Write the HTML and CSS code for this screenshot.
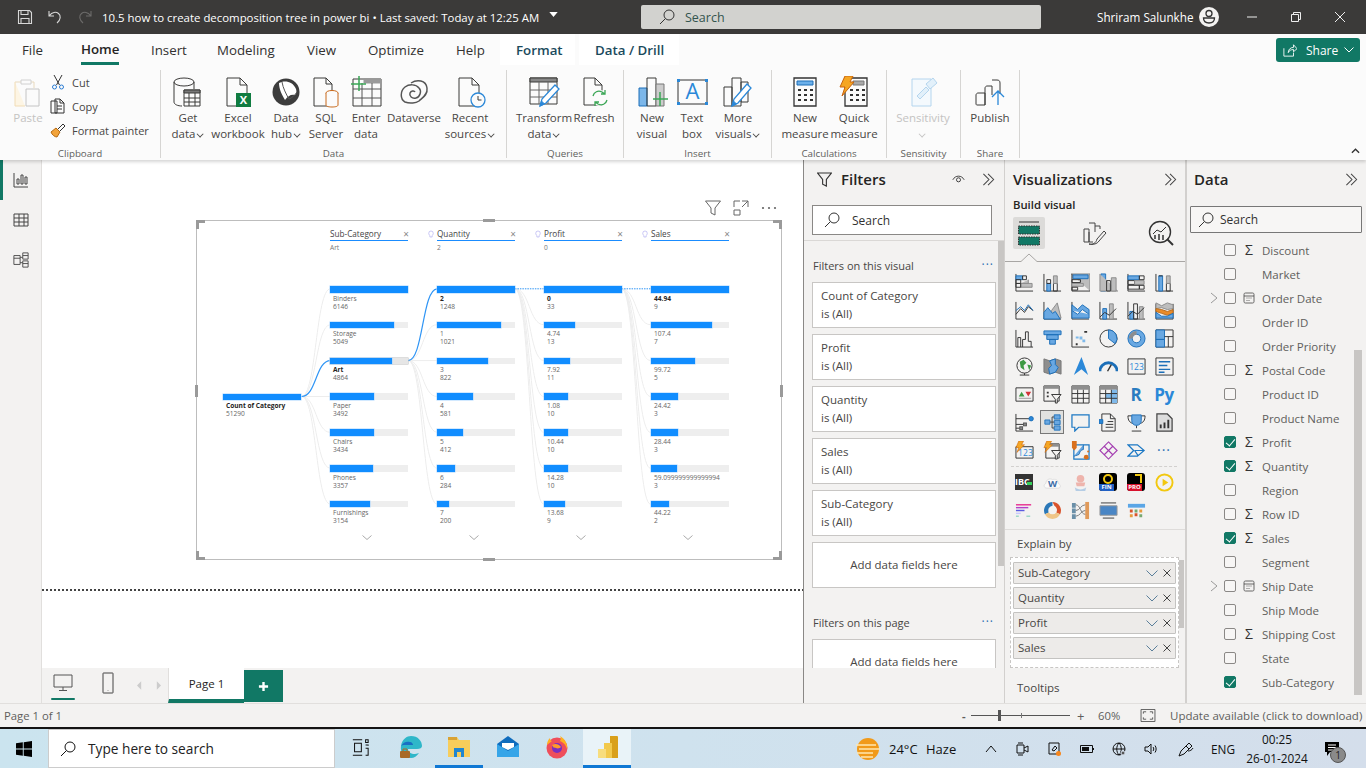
FILE: index.html
```html
<!DOCTYPE html>
<html lang="en">
<head>
<meta charset="utf-8">
<title>Power BI Desktop</title>
<link rel="stylesheet" href="styles.css">
</head>
<body>
<div class="app">

<header class="titlebar">
  <svg class="tb-ic first" viewBox="0 0 16 16"><path d="M1.500 1.500h11l2 2v11h-13z"/><path d="M4 1.500v4h7v-4M4 14.500v-5h8v5"/></svg>
  <svg class="tb-ic" viewBox="0 0 16 16"><path d="M2 2v5h5M2.500 6.500C5 3 9 2.500 11.500 4.500S14 10.500 10 14"/></svg>
  <svg class="tb-ic dim" viewBox="0 0 16 16"><path d="M14 2v5H9M13.500 6.500C11 3 7 2.500 4.500 4.500S2 10.500 6 14"/></svg>
  <span class="doc-title">10.5 how to create decomposition tree in power bi &bull; Last saved: Today at 12:25 AM</span>
  <svg class="caret" viewBox="0 0 10 6"><path d="M0 0h10L5 6z"/></svg>
  <div class="top-search">
    <svg viewBox="0 0 16 16"><circle cx="10" cy="6" r="5"/><path d="M6.500 9.500L1 15"/></svg>
    <span>Search</span>
  </div>
  <span class="user">Shriram Salunkhe</span>
  <svg class="avatar" viewBox="0 0 20 20"><circle cx="10" cy="10" r="10" fill="#f3f2f1"/><circle cx="10" cy="6.500" r="3" fill="none" stroke="#333" stroke-width="1.300"/><path d="M4.500 11h11c0 3.500-2.500 5-5.500 5s-5.500-1.500-5.500-5z" fill="none" stroke="#333" stroke-width="1.300"/></svg>
  <div class="win-btns">
    <svg viewBox="0 0 12 12"><path d="M1 6h10"/></svg>
    <svg viewBox="0 0 12 12"><path d="M1.500 3.500h7v7h-7zM3.500 3.500v-2h7v7h-2"/></svg>
    <svg viewBox="0 0 12 12"><path d="M1 1l10 10M11 1L1 11"/></svg>
  </div>
</header>

<section class="ribbon">
  <nav class="tabs">
    <span class="tab w59 first-tab">File</span>
    <span class="tab w70 current"><span class="tab-label">Home</span></span>
    <span class="tab w66">Insert</span>
    <span class="tab w90">Modeling</span>
    <span class="tab w61">View</span>
    <span class="tab w88">Optimize</span>
    <span class="tab w44">Help</span>
    <span class="tab ctx w75">Format</span>
    <span class="tab ctx w100">Data / Drill</span>
    <span class="share">
      <svg viewBox="0 0 16 16"><path d="M1 6v9h11v-4M6 11c0-4 3-6 6-6V2l4 4.500L12 10V7.500c-3 0-5 1-6 3.500z"/></svg>
      Share
      <svg class="share-chev" viewBox="0 0 10 6"><path d="M.5.500L5 5 9.500.500"/></svg>
    </span>
  </nav>
  <div class="commands">
    <div class="group w161">
      <div class="items pl6">
        <div class="item w44 off">
          <svg viewBox="0 0 32 32"><path d="M3 6h6M19 6h3v6" stroke="#e8d9bd"/><path d="M3 6v24h10" stroke="#f1dcb5" fill="#fdf5e4"/><path d="M9 4h10v4H9z" stroke="#d0d0d0"/><path d="M14 13h13v17H14z" stroke="#c4c4c4" fill="#fbfbfb"/></svg>
          <span>Paste</span>
        </div>
        <div class="small-col">
          <div class="small"><svg viewBox="0 0 16 16"><path d="M4 1l5.500 10M12 1L6.500 11" stroke="#333"/><circle cx="4.500" cy="13" r="2" stroke="#2b7cd3"/><circle cx="11.500" cy="13" r="2" stroke="#2b7cd3"/></svg><span>Cut</span></div>
          <div class="small"><svg viewBox="0 0 16 16"><path d="M5 3V1h5l4 4v10H5zM1 3h6v12H1z" stroke="#333"/><path d="M10 1v4h4M7 8h5M7 11h5" stroke="#333"/></svg><span>Copy</span></div>
          <div class="small"><svg viewBox="0 0 16 16"><path d="M1 10l5-4 4 4-3 5c-2 0-5-2-6-5z" fill="#f2a33a" stroke="#b56a12"/><path d="M8 7l5-5 2 2-5 5" fill="#fff" stroke="#333"/></svg><span>Format painter</span></div>
        </div>
      </div>
      <div class="group-name">Clipboard</div>
    </div>
    <div class="group w346">
      <div class="items pl5">
        <div class="item w44">
          <svg viewBox="0 0 32 32"><ellipse cx="12" cy="6" rx="10" ry="4"/><path d="M2 6v20c0 2.500 4 4 8 4M22 6v7"/><path d="M12 14h16v16H12z" fill="#fbfbfb"/><path d="M12 14h16v3H12z" fill="#777"/><path d="M17 17v13M23 17v13M12 22h16M12 26h16"/></svg>
          <span>Get<br>data<i class="chev"></i></span>
        </div>
        <div class="item w56">
          <svg viewBox="0 0 32 32"><path d="M5 2h13l7 7v21H5z"/><path d="M18 2v7h7"/><rect x="14" y="17" width="15" height="14" fill="#107c41" stroke="none"/><text x="21.500" y="28" class="svg-x">X</text></svg>
          <span>Excel<br>workbook</span>
        </div>
        <div class="item w40">
          <svg viewBox="0 0 32 32"><circle cx="16" cy="16" r="13.500" fill="#3c3c3c" stroke="none"/><path d="M9 7c5-3 14-2 17 6 1 3 0 5-1 6-4-1-7 1-10 5-3-5-6-11-6-17z" fill="#fff" stroke="none"/><path d="M12 6c1 6 4 12 7 17 3-1 6-4 8-7" stroke="#555"/></svg>
          <span>Data<br>hub<i class="chev"></i></span>
        </div>
        <div class="item w40">
          <svg viewBox="0 0 32 32"><path d="M4 2h12l6 6v22H4z" /><path d="M16 2v6h6"/><ellipse cx="22" cy="17" rx="6" ry="2.500" fill="#fbfbfb" stroke="#c8691b"/><path d="M16 17v12c0 1.500 3 2 6 2s6-.500 6-2V17" fill="#fbfbfb" stroke="#c8691b"/></svg>
          <span>SQL<br>Server</span>
        </div>
        <div class="item w40">
          <svg viewBox="0 0 32 32"><path d="M3 3h28v27H3z"/><path d="M14 3h17v4H14z" fill="#999" stroke="#999"/><path d="M3 13h28M3 22h28M12 7v23M22 7v23" stroke="#555"/><path d="M9 0v15M1 8h15" stroke="#3aa655" stroke-width="1.500"/></svg>
          <span>Enter<br>data</span>
        </div>
        <div class="item w56">
          <svg viewBox="0 0 32 32"><path d="M13 7c6-4 15-3 16 5 1 7-5 10-8 13-3 2-9 3-14 1-5-3-5-11 0-15 4-3 11-3 14 1 3 3 1 9-3 10-4 1-7-2-6-5 1-2 4-3 5-1" stroke="#555" stroke-width="1.500"/></svg>
          <span>Dataverse</span>
        </div>
        <div class="item w56">
          <svg viewBox="0 0 32 32"><path d="M5 2h13l7 7v21H5z"/><path d="M18 2v7h7"/><circle cx="24" cy="24" r="7" fill="#fbfbfb" stroke="#2b88d8" stroke-width="1.300"/><path d="M24 20v4h3.500"/></svg>
          <span>Recent<br>sources<i class="chev"></i></span>
        </div>
      </div>
      <div class="group-name">Data</div>
    </div>
    <div class="group w117">
      <div class="items pl9">
        <div class="item w56">
          <svg viewBox="0 0 32 32"><path d="M2 2h27v26H2z"/><path d="M2 2h27v4H2z" fill="#888"/><path d="M2 14h27M2 21h27M11 6v22M20 6v22" stroke="#666"/><path d="M12 30l2-7 13-14 4 4-13 14z" fill="#fff" stroke="#2b88d8" stroke-width="1.300"/><path d="M12 30l1.500-5 3 3z" fill="#2b88d8" stroke="#2b88d8"/></svg>
          <span>Transform<br>data<i class="chev"></i></span>
        </div>
        <div class="item w44">
          <svg viewBox="0 0 32 32"><path d="M6 2h11l7 7v20H6z"/><path d="M17 2v7h7"/><circle cx="22" cy="22" r="8" fill="#fbfbfb" stroke="none"/><path d="M15 20c1-4 5-6 9-4l3 2M29 24c-1 4-5 6-9 4l-3-2M27 14v4h-4M17 30v-4h4" stroke="#3aa655" stroke-width="1.300"/></svg>
          <span>Refresh</span>
        </div>
      </div>
      <div class="group-name">Queries</div>
    </div>
    <div class="group w148">
      <div class="items pl8">
        <div class="item w40">
          <svg viewBox="0 0 32 32"><path d="M3 12h8v18H3z" fill="#7cb7ea" stroke="#1c6fb8"/><path d="M11 2h9v28h-9z"/><path d="M20 8h8v22h-8z" fill="#ccc" stroke="#777"/><path d="M24 16v14M17 23h15" stroke="#3aa655" stroke-width="1.500"/></svg>
          <span>New<br>visual</span>
        </div>
        <div class="item w40">
          <svg viewBox="0 0 32 32"><path d="M2 4h29v24H2z" stroke="#333"/><path d="M1 3h3v3H1zM29 3h3v3h-3zM1 26h3v3H1zM29 26h3v3h-3z" fill="#2b88d8" stroke="none"/><text x="16.500" y="23" class="svg-a">A</text></svg>
          <span>Text<br>box</span>
        </div>
        <div class="item w52">
          <svg viewBox="0 0 32 32"><path d="M2 11h8v19H2zM10 2h9v28h-9zM19 6h7v20h-7z"/><path d="M10 30l2-7 13-15 4 4-13 15z" fill="#fff" stroke="#2b88d8" stroke-width="1.300"/><path d="M10 30l1.500-5 3 3z" fill="#2b88d8" stroke="#2b88d8"/></svg>
          <span>More<br>visuals<i class="chev"></i></span>
        </div>
      </div>
      <div class="group-name">Insert</div>
    </div>
    <div class="group w115">
      <div class="items pl8">
        <div class="item w50">
          <svg viewBox="0 0 32 32"><path d="M5 2h22v28H5z" stroke="#333" stroke-width="1.300"/><path d="M8 5h16v4H8z" fill="#6cb0ea" stroke="#1c6fb8"/><path class="dots" d="M9 13h3v2H9zM15 13h3v2h-3zM21 13h3v2h-3zM9 18h3v2H9zM15 18h3v2h-3zM21 18h3v2h-3zM9 23h3v2H9zM15 23h3v2h-3zM21 23h3v2h-3z"/></svg>
          <span>New<br>measure</span>
        </div>
        <div class="item w48">
          <svg viewBox="0 0 32 32"><path d="M7 2h22v28H7z" stroke="#333" stroke-width="1.300"/><path d="M15 5h11v4H15z" fill="#aaa" stroke="#777"/><path class="dots" d="M12 13h3v2h-3zM18 13h3v2h-3zM24 13h3v2h-3zM12 18h3v2h-3zM18 18h3v2h-3zM24 18h3v2h-3zM12 23h3v2h-3zM18 23h3v2h-3zM24 23h3v2h-3z"/><path d="M7 0h8l-3 6h4L4 20l3-9H2z" fill="#f5a623" stroke="#c9640e"/></svg>
          <span>Quick<br>measure</span>
        </div>
      </div>
      <div class="group-name">Calculations</div>
    </div>
    <div class="group w74">
      <div class="items pl8">
        <div class="item w56 off">
          <svg viewBox="0 0 32 32"><path d="M5 3h19v27H5z" stroke="#b4d5ee" fill="#f4f9fd"/><path d="M10 20l9-9 3 3-9 9z" stroke="#b4d5ee" fill="#e2f0fa"/><path d="M19 8l7-6 4 5-7 6z" stroke="#b4d5ee" fill="#e2f0fa"/></svg>
          <span>Sensitivity<br><i class="chev"></i></span>
        </div>
      </div>
      <div class="group-name">Sensitivity</div>
    </div>
    <div class="group w59">
      <div class="items pl9">
        <div class="item w40">
          <svg viewBox="0 0 32 32"><path d="M2 19c0-1 1-2 2-2h7v12H3c-1 0-1-1-1-1zM11 12c0-1 1-2 2-2h5v9M11 12v17M18 4h5c2 0 3 1 3 3v11"/><path d="M24 29V15M18 21l6-6 6 6" stroke="#2b88d8" stroke-width="1.300"/></svg>
          <span>Publish</span>
        </div>
      </div>
      <div class="group-name">Share</div>
    </div>
    <svg class="collapse" viewBox="0 0 10 6"><path d="M1 5l4-4 4 4"/></svg>
  </div>
</section>

<main class="workspace">
  <aside class="rail">
    <div class="rail-btn active"><svg viewBox="0 0 16 16"><path d="M1 1v14h14"/><path d="M4 12V7h2v5zM8 12V3h2v9zM12 12V5h2v7z"/></svg></div>
    <div class="rail-btn"><svg viewBox="0 0 16 16"><path d="M1 2h14v12H1zM1 6h14M1 10h14M6 2v12M11 2v12"/></svg></div>
    <div class="rail-btn"><svg viewBox="0 0 18 18"><path d="M1 4h7v10H1zM1 7h7M8 6h3M11 1h6v7h-6zM11 10h6v7h-6zM11 4h6M11 13h6M8 12h3"/></svg></div>
  </aside>

  <div class="report">
    <div class="canvas">
      <div class="visual-tools">
        <svg viewBox="0 0 16 16"><path d="M.5 1h15L10 8v7l-4-2V8z"/></svg>
        <svg viewBox="0 0 16 16"><path d="M1 7V1h6M1 10v5h6v-5H1M9 1h6v6M9 7l6-6"/></svg>
        <svg viewBox="0 0 16 16" class="fill"><circle cx="2" cy="8" r="1.100"/><circle cx="8" cy="8" r="1.100"/><circle cx="14" cy="8" r="1.100"/></svg>
      </div>
      <div class="visual">
        <svg class="links" viewBox="197 221 584 339">
          <g class="faint">
            <path d="M301 397C316 397 315 289 330 289M301 397C316 397 315 325 330 325M301 397H330M301 397C316 397 315 433 330 433M301 397C316 397 315 469 330 469M301 397C316 397 315 505 330 505"/>
            <path d="M408 361C423 361 422 325 437 325M408 361H437M408 361C423 361 422 397 437 397M408 361C423 361 422 433 437 433M408 361C423 361 422 469 437 469M408 361C423 361 422 505 437 505"/>
            <path d="M515 289C530 289 529 325 544 325M515 289C530 289 529 361 544 361M515 289C530 289 529 397 544 397M515 289C530 289 529 433 544 433M515 289C530 289 529 469 544 469M515 289C530 289 529 505 544 505"/>
            <path d="M622 289C637 289 636 325 651 325M622 289C637 289 636 361 651 361M622 289C637 289 636 397 651 397M622 289C637 289 636 433 651 433M622 289C637 289 636 469 651 469M622 289C637 289 636 505 651 505"/>
          </g>
          <g class="blue">
            <path d="M301 397C316 397 315 361 330 361M408 361C423 361 422 289 437 289"/>
            <path class="dotted" d="M515 289H544M622 289H651"/>
          </g>
        </svg>
        <i class="corner tl"></i><i class="corner tr"></i><i class="corner bl"></i><i class="corner br"></i>
        <i class="edge top"></i><i class="edge bottom"></i><i class="edge left"></i><i class="edge right"></i>

        <div class="tree">
          <div class="col root">
            <div class="row">
              <div class="track"><div class="fill-bar full"></div></div>
              <div class="t-label sel">Count of Category</div>
              <div class="t-val">51290</div>
            </div>
          </div>

          <div class="col">
            <div class="col-head"><span>Sub-Category</span><b>&times;</b></div>
            <div class="col-sub">Art</div>
            <div class="rows">
              <div class="row"><div class="track"><div class="fill-bar" style="width:100%"></div></div><div class="t-label">Binders</div><div class="t-val">6146</div></div>
              <div class="row"><div class="track"><div class="fill-bar" style="width:82%"></div></div><div class="t-label">Storage</div><div class="t-val">5049</div></div>
              <div class="row"><div class="track chosen"><div class="fill-bar" style="width:79%"></div></div><div class="t-label sel">Art</div><div class="t-val">4864</div></div>
              <div class="row"><div class="track"><div class="fill-bar" style="width:57%"></div></div><div class="t-label">Paper</div><div class="t-val">3492</div></div>
              <div class="row"><div class="track"><div class="fill-bar" style="width:56%"></div></div><div class="t-label">Chairs</div><div class="t-val">3434</div></div>
              <div class="row"><div class="track"><div class="fill-bar" style="width:54.500%"></div></div><div class="t-label">Phones</div><div class="t-val">3357</div></div>
              <div class="row"><div class="track"><div class="fill-bar" style="width:51%"></div></div><div class="t-label">Furnishings</div><div class="t-val">3154</div></div>
            </div>
            <svg class="more" viewBox="0 0 10 5"><path d="M.5.500L5 4.500 9.500.500"/></svg>
          </div>

          <div class="col">
            <div class="col-head"><svg class="bulb" viewBox="0 0 8 10"><path d="M2.500 7C1 6 1 4.500 1 4a3 3 0 0 1 6 0c0 .500 0 2-1.500 3v2h-3z"/></svg><span>Quantity</span><b>&times;</b></div>
            <div class="col-sub">2</div>
            <div class="rows">
              <div class="row"><div class="track"><div class="fill-bar" style="width:100%"></div></div><div class="t-label sel">2</div><div class="t-val">1248</div></div>
              <div class="row"><div class="track"><div class="fill-bar" style="width:82%"></div></div><div class="t-label">1</div><div class="t-val">1021</div></div>
              <div class="row"><div class="track"><div class="fill-bar" style="width:66%"></div></div><div class="t-label">3</div><div class="t-val">822</div></div>
              <div class="row"><div class="track"><div class="fill-bar" style="width:46.500%"></div></div><div class="t-label">4</div><div class="t-val">581</div></div>
              <div class="row"><div class="track"><div class="fill-bar" style="width:33%"></div></div><div class="t-label">5</div><div class="t-val">412</div></div>
              <div class="row"><div class="track"><div class="fill-bar" style="width:23%"></div></div><div class="t-label">6</div><div class="t-val">284</div></div>
              <div class="row"><div class="track"><div class="fill-bar" style="width:16%"></div></div><div class="t-label">7</div><div class="t-val">200</div></div>
            </div>
            <svg class="more" viewBox="0 0 10 5"><path d="M.5.500L5 4.500 9.500.500"/></svg>
          </div>

          <div class="col">
            <div class="col-head"><svg class="bulb" viewBox="0 0 8 10"><path d="M2.500 7C1 6 1 4.500 1 4a3 3 0 0 1 6 0c0 .500 0 2-1.500 3v2h-3z"/></svg><span>Profit</span><b>&times;</b></div>
            <div class="col-sub">0</div>
            <div class="rows">
              <div class="row"><div class="track"><div class="fill-bar" style="width:100%"></div></div><div class="t-label sel">0</div><div class="t-val">33</div></div>
              <div class="row"><div class="track"><div class="fill-bar" style="width:39.500%"></div></div><div class="t-label">4.74</div><div class="t-val">13</div></div>
              <div class="row"><div class="track"><div class="fill-bar" style="width:33.500%"></div></div><div class="t-label">7.92</div><div class="t-val">11</div></div>
              <div class="row"><div class="track"><div class="fill-bar" style="width:30.500%"></div></div><div class="t-label">1.08</div><div class="t-val">10</div></div>
              <div class="row"><div class="track"><div class="fill-bar" style="width:30.500%"></div></div><div class="t-label">10.44</div><div class="t-val">10</div></div>
              <div class="row"><div class="track"><div class="fill-bar" style="width:30.500%"></div></div><div class="t-label">14.28</div><div class="t-val">10</div></div>
              <div class="row"><div class="track"><div class="fill-bar" style="width:27.500%"></div></div><div class="t-label">13.68</div><div class="t-val">9</div></div>
            </div>
            <svg class="more" viewBox="0 0 10 5"><path d="M.5.500L5 4.500 9.500.500"/></svg>
          </div>

          <div class="col">
            <div class="col-head"><svg class="bulb" viewBox="0 0 8 10"><path d="M2.500 7C1 6 1 4.500 1 4a3 3 0 0 1 6 0c0 .500 0 2-1.500 3v2h-3z"/></svg><span>Sales</span><b>&times;</b></div>
            <div class="col-sub">&nbsp;</div>
            <div class="rows">
              <div class="row"><div class="track"><div class="fill-bar" style="width:100%"></div></div><div class="t-label sel">44.94</div><div class="t-val">9</div></div>
              <div class="row"><div class="track"><div class="fill-bar" style="width:78%"></div></div><div class="t-label">107.4</div><div class="t-val">7</div></div>
              <div class="row"><div class="track"><div class="fill-bar" style="width:56%"></div></div><div class="t-label">99.72</div><div class="t-val">5</div></div>
              <div class="row"><div class="track"><div class="fill-bar" style="width:34%"></div></div><div class="t-label">24.42</div><div class="t-val">3</div></div>
              <div class="row"><div class="track"><div class="fill-bar" style="width:34%"></div></div><div class="t-label">28.44</div><div class="t-val">3</div></div>
              <div class="row"><div class="track"><div class="fill-bar" style="width:33.500%"></div></div><div class="t-label">59.099999999999994</div><div class="t-val">3</div></div>
              <div class="row"><div class="track"><div class="fill-bar" style="width:22.500%"></div></div><div class="t-label">44.22</div><div class="t-val">2</div></div>
            </div>
            <svg class="more" viewBox="0 0 10 5"><path d="M.5.500L5 4.500 9.500.500"/></svg>
          </div>
        </div>
      </div>
      <div class="page-end"></div>
    </div>

    <div class="pagebar">
      <div class="view-btn on"><svg viewBox="0 0 20 18"><path d="M1 1h18v12H1zM10 13v3M6 16.500h8"/></svg></div>
      <div class="view-btn"><svg viewBox="0 0 12 22"><path d="M1.500 1h9c.500 0 .500 0 .500 .500v19c0 .500 0 .500-.500 .500h-9c-.500 0-.500 0-.500-.500v-19c0-.500 0-.500 .500-.500zM6 18.500v.500"/></svg></div>
      <svg class="pg-arrow" viewBox="0 0 6 10"><path d="M5 0v10L0 5z"/></svg>
      <svg class="pg-arrow" viewBox="0 0 6 10"><path d="M1 0v10l5-5z"/></svg>
      <div class="page-tab">Page 1</div>
      <div class="page-add"><svg viewBox="0 0 12 12"><path d="M6 1v10M1 6h10"/></svg></div>
    </div>
  </div>

  <aside class="pane filters">
    <div class="filters-head">
      <svg class="f-ic" viewBox="0 0 16 16"><path d="M.5 1h15L10 8v7l-4-2V8z"/></svg>
      <span class="pane-title">Filters</span>
      <svg class="eye" viewBox="0 0 16 12"><path d="M1 7c3-6 11-6 14 0"/><circle cx="8" cy="7" r="2.500"/></svg>
      <svg class="dbl" viewBox="0 0 14 14"><path d="M1.500 1l6 6-6 6M6.500 1l6 6-6 6"/></svg>
    </div>
    <div class="f-search"><svg viewBox="0 0 16 16"><circle cx="10" cy="6" r="5"/><path d="M6.500 9.500L1 15"/></svg><span>Search</span></div>
    <div class="f-scroll">
      <i class="f-thumb"></i>
      <div class="f-section"><span>Filters on this visual</span><em>&middot;&middot;&middot;</em></div>
      <div class="f-card">Count of Category<br>is (All)</div>
      <div class="f-card">Profit<br>is (All)</div>
      <div class="f-card">Quantity<br>is (All)</div>
      <div class="f-card">Sales<br>is (All)</div>
      <div class="f-card">Sub-Category<br>is (All)</div>
      <div class="f-card add">Add data fields here</div>
      <div class="f-section page"><span>Filters on this page</span><em>&middot;&middot;&middot;</em></div>
      <div class="f-card add">Add data fields here</div>
    </div>
  </aside>

  <aside class="pane viz">
    <div class="pane-head"><span class="pane-title">Visualizations</span><svg class="dbl" viewBox="0 0 14 14"><path d="M1.500 1l6 6-6 6M6.500 1l6 6-6 6"/></svg></div>
    <div class="build">Build visual</div>
    <div class="viz-tabs">
      <div class="viz-tab on"><svg viewBox="0 0 26 26"><path d="M3 2h20" stroke="#333"/><rect x="2.500" y="6" width="21" height="8" fill="#117865" stroke="#333" stroke-dasharray="1.500 1"/><rect x="2.500" y="17" width="21" height="8" fill="#117865" stroke="#333" stroke-dasharray="1.500 1"/></svg></div>
      <div class="viz-tab"><svg viewBox="0 0 26 26"><path d="M2 9h5v13H2zM7 3h6v9M13 6h5v3M7 12v10h4" stroke="#444"/><path d="M7 24c4 1 7-1 8-5l7-8 2 2-7 8c-2 3-6 4-10 3z" stroke="#444"/></svg></div>
      <div class="viz-tab"><svg viewBox="0 0 26 26"><circle cx="12" cy="12" r="10.500" stroke="#333" stroke-width="1.400"/><path d="M5 14l4-4 4 2 5-5" stroke="#333"/><path d="M7 19v-4M11 20v-6M15 20v-5" stroke="#333" stroke-width="1.500"/><path d="M19 19l6 6" stroke="#333" stroke-width="2"/></svg></div>
    </div>
    <svg class="viz-rule" viewBox="0 0 180 9"><path d="M0 8.500h16L24 1l8 7.500h148"/></svg>
    <div class="viz-grid">
      <svg viewBox="0 0 20 20"><path class="k" d="M1 1v18h18"/><path class="b" d="M1 3h7v4H1z"/><path class="k" d="M8 3h4v4H8z"/><path class="k" d="M1 7h5v4H1z"/><path class="g" d="M6 11h8v-4"/><path class="g" d="M6 11h12v4H6z"/><path class="k" d="M1 11h5v4H1z"/></svg>
      <svg viewBox="0 0 20 20"><path class="k" d="M1 1v18h18"/><path class="b" d="M4 11h4v8H4z"/><path class="k" d="M8 9h0M4 7h4v4H4z"/><path class="k" d="M11 11h4v8h-4z"/><path class="g" d="M11 3h4v8h-4z"/></svg>
      <svg viewBox="0 0 20 20"><path class="g" d="M0 1h20v18"/><path class="b" d="M2 2h16v4H2z"/><path class="k" d="M1 1v18h19"/><path class="k" d="M1 7h9v3H1z"/><path class="g" d="M1 11h12v3H1z"/><path class="k" d="M1 15h6v3H1z"/></svg>
      <svg viewBox="0 0 20 20"><path class="b" d="M2 1h5v18H2z"/><path class="g" d="M1 1v18h19"/><path class="k" d="M8 8h4v11H8z"/><path class="g" d="M13 5h5v14h-5z"/></svg>
      <svg viewBox="0 0 20 20"><path class="k" d="M1 1v18h18"/><path class="b" d="M1 3h12v4H1z"/><path class="k" d="M13 3h5v4h-5z"/><path class="k" d="M1 8h7v4H1z"/><path class="g" d="M8 8h10v4H8z"/><path class="k" d="M1 13h12v4H1zM13 13h5v4h-5z"/></svg>
      <svg viewBox="0 0 20 20"><path class="k" d="M1 1v18h18"/><path class="b" d="M4 3h4v16H4z"/><path class="k" d="M4 3h4M12 11h4v8h-4z"/><path class="g" d="M12 3h4v8h-4z"/></svg>

      <svg viewBox="0 0 20 20"><path class="k" d="M1 1v18h18"/><path class="k" d="M1 14l5-6 4 4 4-6 5 4"/><path class="l" d="M1 10l5-4 4 4 4-6 5 6"/></svg>
      <svg viewBox="0 0 20 20"><path class="k" d="M1 1v18h18"/><path class="g" d="M9 10l6-8 4 16H6z"/><path class="b" d="M1 19V12l4-5 5 6 3-2 5 8z"/></svg>
      <svg viewBox="0 0 20 20"><path class="k" d="M1 1v18h18"/><path class="b" d="M1 4l6 5 5-5 7 5v9H1z"/><path class="w" d="M1 10l6 4 5-5 7 5"/></svg>
      <svg viewBox="0 0 20 20"><path class="k" d="M1 1v18h18"/><path class="b" d="M4 8h4v11H4z"/><path class="g" d="M11 3h4v16h-4z"/><path class="k" d="M1 17l5-5 5 3 7-7"/></svg>
      <svg viewBox="0 0 20 20"><path class="k" d="M1 1v18h18"/><path class="b" d="M3 11h4v8H3z"/><path class="k" d="M7 3h4v16H7z"/><path class="g" d="M13 6h4v13h-4z"/><path class="k" d="M1 16l5-5 5 3 7-7"/></svg>
      <svg viewBox="0 0 20 20"><path class="k" d="M1 3v16h18V3"/><path class="g" d="M1 2l6 3 6-3 6 2v4l-6 1-6-2-6 1z"/><path class="o" d="M1 8l6 1 6 2 6-2v4l-6 2-6-2-6-2z"/><path class="b" d="M1 12l6 4 6 0 6-3v5H1z"/></svg>

      <svg viewBox="0 0 20 20"><path class="k" d="M1 1v18h18"/><path class="k" d="M3 19V9h3v10M8 19V11h3V3h3v10h3v6"/></svg>
      <svg viewBox="0 0 20 20"><path class="b" d="M1 2h18v4H1zM4 6h12v5H4zM7 11h6v5H7z"/></svg>
      <svg viewBox="0 0 20 20"><path class="k" d="M1 1v18h18"/><path class="dk" d="M5 15h2v2H5zM14 2h3v2h-3z"/><path class="lb" d="M9 8h3v3H9zM12 11h3v3h-3zM5 8h3v2H5z"/></svg>
      <svg viewBox="0 0 20 20"><circle class="k" cx="10" cy="10" r="9"/><path class="b" d="M10 1a9 9 0 0 1 7 14.500L10 10z"/></svg>
      <svg viewBox="0 0 20 20"><circle class="b" cx="10" cy="10" r="9"/><circle class="wf" cx="10" cy="10" r="4.500"/><path class="gf" d="M2 10a8 8 0 0 1 8-8v4a4 4 0 0 0-4 4z"/></svg>
      <svg viewBox="0 0 20 20"><path class="k" d="M1 1h18v18H1z"/><path class="b" d="M1 1h9v10H1zM1 11h9v8H1z"/><path class="k" d="M10 8h9M14 8v11"/></svg>

      <svg viewBox="0 0 20 20"><circle class="k" cx="10" cy="9" r="8"/><path class="gr" d="M5 5l4-2 3 3-3 3 1 5-4-3z"/><path class="gr" d="M13 8l4 1-2 5z"/><path class="k" d="M5 19h10M10 17v2"/></svg>
      <svg viewBox="0 0 20 20"><path class="gf2" d="M1 2l6 2 6-2 6 2v14l-6-2-6 2-6-2z"/><path class="b" d="M7 4l6-2v6l3 3-3 5-6 2-1-6 3-3z"/></svg>
      <svg viewBox="0 0 20 20"><path class="arrow" d="M11 0l7 19-7-6-8 6z"/></svg>
      <svg viewBox="0 0 20 20"><path class="arc" d="M1 15A9 9 0 0 1 19 15"/><path class="k2" d="M9 15l4-7"/></svg>
      <svg viewBox="0 0 20 20"><path class="k" d="M1 2h18v16H1z"/><text x="10" y="14" class="svg-123">123</text></svg>
      <svg viewBox="0 0 20 20"><path class="k" d="M1 1h18v18H1z"/><path class="bl2" d="M4 5h12M4 9h9M4 13h12M4 16h6"/></svg>

      <svg viewBox="0 0 20 20"><path class="k" d="M1 3h18v14H1z"/><path class="gg" d="M4 12l3-5 3 5z"/><path class="rr" d="M11 7h6l-3 5z"/><path class="ggl" d="M4 14h13"/></svg>
      <svg viewBox="0 0 20 20"><path class="k" d="M1 1h16v16H1z"/><path class="gf" d="M1 1h16v3H1z"/><path class="dk" d="M4 7h2v2H4zM4 11h2v2H4z"/><path class="wk" d="M9 10h10l-4 5v4h-2v-4z"/></svg>
      <svg viewBox="0 0 20 20"><path class="k" d="M1 1h18v18H1z"/><path class="gf" d="M1 1h18v4H1z"/><path class="k" d="M1 9h18M1 14h18M7 5v14M13 5v14"/></svg>
      <svg viewBox="0 0 20 20"><path class="k" d="M1 1h18v18H1z"/><path class="gf" d="M1 1h18v4H1z"/><path class="lb" d="M13 5h6v14h-6zM7 9h6v5H7z"/><path class="k" d="M1 9h18M1 14h18M7 5v14M13 5v14"/></svg>
      <span class="glyph r">R</span>
      <span class="glyph py">Py</span>

      <svg viewBox="0 0 20 20"><path class="k" d="M1 1v18h18M1 6h15M1 12h8M1 16h4"/><circle class="bd" cx="17" cy="6" r="2.300"/><rect class="gs" x="9" y="10.500" width="3" height="3"/><rect class="gs" x="5" y="14.500" width="3" height="3"/></svg>
      <span class="tree-on"><svg viewBox="0 0 20 20"><path class="b" d="M1 7h6v5H1zM12 1h7v5h-7zM12 7.500h7v5h-7zM12 14h7v5h-7z"/><path class="k" d="M7 9.500h5M9.500 3.500v13M9.500 3.500H12M9.500 16.500H12"/></svg></span>
      <svg viewBox="0 0 20 20"><path class="bs" d="M1 2h18v13H8l-4 4v-4H1z"/></svg>
      <svg viewBox="0 0 20 20"><path class="k" d="M3 1h9l5 5v13H3z"/><path class="k" d="M12 1v5h5M7 12h8M7 15h8M9 9h6"/><path class="bd" d="M0 7h4v4H0z"/></svg>
      <svg viewBox="0 0 20 20"><path class="k" d="M5 3H1c0 5 2 7 5 8M15 3h4c0 5-2 7-5 8M10 13v3M5 19h10"/><path class="b" d="M5 2h10v6c0 3-2 5-5 5s-5-2-5-5z"/></svg>
      <svg viewBox="0 0 20 20"><path class="kg" d="M2 1h11l5 5v13H2z"/><path class="dk" d="M5 12h2v4H5zM9 10h2v6H9zM13 7h2v9h-2z"/></svg>

      <svg viewBox="0 0 20 20"><path class="k" d="M1 6h18v12H1z"/><text x="11" y="16" class="svg-123b">123</text><path class="bolt" d="M4 0h5L7 4h3L2 12l2-5H1z"/></svg>
      <svg viewBox="0 0 20 20"><path class="k" d="M3 3h14v15H3z"/><path class="gf" d="M7 3h10v3H7z"/><path class="wk" d="M9 10h10l-4 5v4h-2v-4z"/><path class="bolt" d="M4 0h5L7 4h3L2 12l2-5H1z"/></svg>
      <svg viewBox="0 0 20 20"><path class="bs" d="M3 4h16v15H3z"/><path class="b" d="M13 4v5c-2 0-4 2-4 4s-4 2-6 3"/><path class="ob" d="M1 0h5v7L3.500 10 1 7z"/><circle class="ob" cx="16" cy="17" r="2.500"/><circle class="ob" cx="18" cy="11" r="1"/></svg>
      <svg viewBox="0 0 20 20"><path class="pa" d="M10 1l9 9-9 9-9-9zM10 1v0M5.500 5.500l9 9M14.500 5.500l-9 9"/></svg>
      <svg viewBox="0 0 20 20"><path class="bs" d="M1 4h10l7 6-7 6H1l6-6zM8 10l4 6M8 10h10"/></svg>
      <span class="glyph more-viz">&middot;&middot;&middot;</span>
    </div>
    <div class="viz-dash"></div>
    <div class="viz-grid custom">
      <span class="ext-bc">IBC<i></i></span>
      <svg viewBox="0 0 20 20"><path class="cloud" d="M4 16c-3 0-4-4-1-5 0-4 4-6 7-4 3-1 6 0 6 4 3 1 3 5 0 5z"/><text x="10" y="15" class="svg-w">W</text></svg>
      <svg viewBox="0 0 20 20"><circle class="pk" cx="10" cy="6" r="4"/><path class="pk" d="M5 10h10l-1 4H6z"/><path class="bl3" d="M4 15c3 3 9 3 12 0l-1 4H5z"/></svg>
      <span class="ext-fin"><i></i><b class="fin">FIN</b></span>
      <span class="ext-fin pro"><i></i><b class="prot">PRO</b></span>
      <svg viewBox="0 0 20 20"><circle class="yc" cx="10" cy="10" r="8.500"/><path class="yf" d="M8 6l6 4-6 4z"/></svg>
      <svg viewBox="0 0 20 20"><path class="c1" d="M1 4h16"/><path class="c2" d="M1 7h13"/><path class="c3" d="M1 10h9"/><path class="c4" d="M1 13h5"/><path class="c5" d="M1 16h3M12 16h4"/></svg>
      <svg viewBox="0 0 20 20"><path class="p1" d="M10 1a9 9 0 0 0-8 13l4-2a5 5 0 0 1 4-7z"/><path class="p2" d="M10 1a9 9 0 0 1 8 13l-4-2a5 5 0 0 0-2-7z"/><path class="p3" d="M18 14a9 9 0 0 1-16 0l4-2a5 5 0 0 0 8 0z"/></svg>
      <svg viewBox="0 0 20 20"><path class="sk1" d="M1 2h4v5H1zM1 8h4v5H1zM1 14h4v5H1z"/><path class="sk2" d="M15 1h4v18h-4z"/><path class="sk3" d="M5 4c5 0 5 10 10 10M5 10c5 0 5-6 10-6M5 16c5 0 5-6 10-6"/></svg>
      <svg viewBox="0 0 20 20"><path class="gf" d="M2 1h16v2H2zM4 17h12v2H4z"/><path class="mon" d="M1 5h18v10H1z"/></svg>
      <svg viewBox="0 0 20 20"><path class="cal1" d="M1 3h18v4H1z"/><path class="cal2" d="M3 9h3v3H3zM8 13h3v3H8z"/><path class="cal3" d="M13 9h3v3h-3zM3 14h3v3H3z"/><path class="cal4" d="M8 9h3v3H8zM13 14h3v3h-3z"/></svg>
    </div>
    <div class="viz-line"></div>
    <div class="well-title">Explain by</div>
    <div class="well">
      <i class="well-thumb"></i>
      <div class="field"><span>Sub-Category</span><svg class="fchev" viewBox="0 0 12 7"><path d="M.5 .5L6 6l5.500-5.500"/></svg><svg class="fx" viewBox="0 0 8 8"><path d="M.5.500l7 7M7.500.500l-7 7"/></svg></div>
      <div class="field"><span>Quantity</span><svg class="fchev" viewBox="0 0 12 7"><path d="M.5 .5L6 6l5.500-5.500"/></svg><svg class="fx" viewBox="0 0 8 8"><path d="M.5.500l7 7M7.500.500l-7 7"/></svg></div>
      <div class="field"><span>Profit</span><svg class="fchev" viewBox="0 0 12 7"><path d="M.5 .5L6 6l5.500-5.500"/></svg><svg class="fx" viewBox="0 0 8 8"><path d="M.5.500l7 7M7.500.500l-7 7"/></svg></div>
      <div class="field"><span>Sales</span><svg class="fchev" viewBox="0 0 12 7"><path d="M.5 .5L6 6l5.500-5.500"/></svg><svg class="fx" viewBox="0 0 8 8"><path d="M.5.500l7 7M7.500.500l-7 7"/></svg></div>
    </div>
    <div class="well-title tips">Tooltips</div>
  </aside>

  <aside class="pane data">
    <div class="pane-head"><span class="pane-title">Data</span><svg class="dbl" viewBox="0 0 14 14"><path d="M1.500 1l6 6-6 6M6.500 1l6 6-6 6"/></svg></div>
    <div class="d-search"><svg viewBox="0 0 16 16"><circle cx="10" cy="6" r="5"/><path d="M6.500 9.500L1 15"/></svg><span>Search</span></div>
    <i class="d-thumb"></i>
    <ul class="fields">
      <li><i class="exp"></i><i class="cb"></i><i class="ty sig">&Sigma;</i>Discount</li>
      <li><i class="exp"></i><i class="cb"></i><i class="ty"></i>Market</li>
      <li><svg class="exp" viewBox="0 0 8 12"><path d="M1 1l6 5-6 5"/></svg><i class="cb"></i><svg class="ty cal" viewBox="0 0 12 12"><path d="M1 2.500C1 1.500 1.500 1 2.500 1h7c1 0 1.500 .500 1.500 1.500v7c0 1-.500 1.500-1.500 1.500h-7C1.500 11 1 10.500 1 9.500zM1 4h10M3.500 6h1M5.500 6h1M7.500 6h1M3.500 8.500h1M5.500 8.500h1"/></svg>Order Date</li>
      <li><i class="exp"></i><i class="cb"></i><i class="ty"></i>Order ID</li>
      <li><i class="exp"></i><i class="cb"></i><i class="ty"></i>Order Priority</li>
      <li><i class="exp"></i><i class="cb"></i><i class="ty sig">&Sigma;</i>Postal Code</li>
      <li><i class="exp"></i><i class="cb"></i><i class="ty"></i>Product ID</li>
      <li><i class="exp"></i><i class="cb"></i><i class="ty"></i>Product Name</li>
      <li><i class="exp"></i><i class="cb on"></i><i class="ty sig">&Sigma;</i>Profit</li>
      <li><i class="exp"></i><i class="cb on"></i><i class="ty sig">&Sigma;</i>Quantity</li>
      <li><i class="exp"></i><i class="cb"></i><i class="ty"></i>Region</li>
      <li><i class="exp"></i><i class="cb"></i><i class="ty sig">&Sigma;</i>Row ID</li>
      <li><i class="exp"></i><i class="cb on"></i><i class="ty sig">&Sigma;</i>Sales</li>
      <li><i class="exp"></i><i class="cb"></i><i class="ty"></i>Segment</li>
      <li><svg class="exp" viewBox="0 0 8 12"><path d="M1 1l6 5-6 5"/></svg><i class="cb"></i><svg class="ty cal" viewBox="0 0 12 12"><path d="M1 2.500C1 1.500 1.500 1 2.500 1h7c1 0 1.500 .500 1.500 1.500v7c0 1-.500 1.500-1.500 1.500h-7C1.500 11 1 10.500 1 9.500zM1 4h10M3.500 6h1M5.500 6h1M7.500 6h1M3.500 8.500h1M5.500 8.500h1"/></svg>Ship Date</li>
      <li><i class="exp"></i><i class="cb"></i><i class="ty"></i>Ship Mode</li>
      <li><i class="exp"></i><i class="cb"></i><i class="ty sig">&Sigma;</i>Shipping Cost</li>
      <li><i class="exp"></i><i class="cb"></i><i class="ty"></i>State</li>
      <li><i class="exp"></i><i class="cb on"></i><i class="ty"></i>Sub-Category</li>
    </ul>
  </aside>
</main>

<footer class="status">
  <span class="pageinfo">Page 1 of 1</span>
  <span class="zoom-minus">-</span>
  <span class="slider"><i class="thumb"></i><i class="tick"></i></span>
  <span class="zoom-plus">+</span>
  <span class="zoom-val">60%</span>
  <svg class="fit" viewBox="0 0 16 14"><path d="M.5.500h15v13H.500z"/><path class="fit-in" d="M3 5V3h3M10 3h3v2M13 9v2h-3M6 11H3V9"/></svg>
  <span class="update">Update available (click to download)</span>
</footer>

<div class="taskbar">
  <div class="start"><svg viewBox="0 0 16 16"><path d="M0 2.300l6.800-1v6.200H0zM7.700 1.200L16 0v7.500H7.700zM0 8.400h6.800v6.300l-6.800-1zM7.700 8.400H16V16l-8.300-1.200z"/></svg></div>
  <div class="ts-box"><svg viewBox="0 0 16 16"><circle cx="10" cy="6" r="5"/><path d="M6.500 9.500L1 15"/></svg><span>Type here to search</span></div>
  <div class="task w48"><svg viewBox="0 0 20 20"><path class="tv" d="M1 1h11M1 19h11M3 5h8v10H3zM16 1h3v3h-3zM16 7h3v1M16 11h3v8h-3"/></svg></div>
  <div class="task w48"><svg viewBox="0 0 24 24"><path class="e1" d="M2 11C3 4 8 1 12 1c7 0 11 5 11 10 0 2-2 3-5 3H9c0 3 3 5 7 5 2 0 3-1 4-1-2 3-5 5-8 5C5 23 1 18 2 11z"/><path class="e2" d="M2 11c2-4 6-5 9-4 2 0 3 2 3 3H6c-2 0-3 0-4 1z"/><rect class="e3" x="1" y="16" width="10" height="7" rx="1"/><path class="e4" d="M4 16v-2h4v2"/></svg></div>
  <div class="task w48"><svg viewBox="0 0 24 24"><path class="x1" d="M1 2h9l2 3h11v17H1z"/><path class="x2" d="M1 2h9v3H1z"/><path class="x3" d="M7 13h10v9h-3v-5h-4v5H7z"/></svg></div>
  <div class="task w49"><svg viewBox="0 0 24 24"><path class="m1" d="M12 1l11 8v13H1V9z"/><path class="m2" d="M1 9l11 7 11-7v13H1z"/><path class="m3" d="M6 8h12v4l-6 3-6-3z"/></svg></div>
  <div class="task w49"><svg viewBox="0 0 24 24"><circle class="f1" cx="12" cy="13" r="10.500"/><path class="f2" d="M15 1c5 3 8 8 7 13-2-6-5-7-7-8 1-2 1-3 0-5zM2 10c0-3 1-5 3-7 0 2 1 3 2 3z"/><circle class="f3" cx="12" cy="13" r="5"/><path class="f4" d="M7 10c3-2 7-1 9 2-1 1-3 2-5 1-1 0-1-1-2 0z"/></svg></div>
  <div class="task pbi w48"><svg viewBox="0 0 24 24"><path class="pb1" d="M15 1h7c1 0 1 1 1 1v21h-8z"/><path class="pb2" d="M9 8h8v15H9z"/><path class="pb3" d="M3 14h8v9H3z"/></svg></div>
  <div class="tb-right">
    <svg class="wx" viewBox="0 0 24 24"><circle class="wx1" cx="12" cy="12" r="11"/><path class="wx2" d="M0 8h20M3 12h22M1 16h16M5 20h12"/></svg>
    <span class="temp">24&deg;C</span><span class="haze">Haze</span>
    <div class="tray">
      <svg viewBox="0 0 14 14"><path class="tr" d="M2 10l5-6 5 6" /></svg>
      <svg viewBox="0 0 14 14"><path class="tr" d="M1 3h7v8H1zM8 6l4-2v6l-4-2M2 1h5M2 13h5"/></svg>
      <svg viewBox="0 0 14 14"><path class="tr" d="M1 1h10v11H1zM4 8l3-4 2 2-3 3z"/><circle class="tro" cx="10.500" cy="11.500" r="2.500"/></svg>
      <svg viewBox="0 0 14 14"><path class="tr" d="M.5 3.500h12v7H.5zM13.500 6v2"/><path class="trf" d="M2 5h7v4H2z"/></svg>
      <svg viewBox="0 0 14 14"><circle class="tr" cx="7" cy="7" r="6"/><path class="tr" d="M1 7h12M7 1c-3 3-3 9 0 12M7 1c3 3 3 9 0 12"/><circle class="trk" cx="11" cy="11" r="2"/></svg>
      <svg viewBox="0 0 14 14"><path class="tr" d="M1 5h3l3-3v10L4 9H1zM9 5c1 1 1 3 0 4M11 3.500c1.500 2 1.500 5 0 7"/></svg>
    </div>
    <svg class="pen" viewBox="0 0 16 16"><path class="tr" d="M1 15l2-5 8-8 3 3-8 8zM8 5l3 3M10 10c2 0 4-1 5-3"/></svg>
    <span class="eng">ENG</span>
    <div class="clock"><span>00:25</span><span>26-01-2024</span></div>
    <div class="notif"><svg viewBox="0 0 16 16"><path d="M1 1h14v10H6l-3 4v-4H1z"/><path class="nl" d="M4 4h8M4 6.500h8M4 9h5"/></svg><b>1</b></div>
  </div>
</div>

</div>
</body>
</html>
```

FILE: styles.css
```css
*{box-sizing:border-box}
html,body{margin:0;height:100%;overflow:hidden}
body{font-family:"Open Sans","Noto Sans",sans-serif;font-size:11.500px;color:#323130;background:#f3f2f1}
.app{width:1366px;height:768px;display:flex;flex-direction:column;overflow:hidden}
i{font-style:normal;display:block}
svg{display:block;flex:none}
ul{list-style:none;margin:0;padding:0}

.w40{width:40px}.w44{width:44px}.w48{width:48px}.w49{width:49px}.w50{width:50px}.w52{width:52px}.w56{width:56px}.w59{width:59px}
.w61{width:61px}.w66{width:66px}.w70{width:70px}.w74{width:74px}.w75{width:75px}.w88{width:88px}.w90{width:90px}.w100{width:100px}
.w115{width:115px}.w117{width:117px}.w148{width:148px}.w161{width:161px}.w346{width:346px}
.pl5{padding-left:5px}.pl6{padding-left:6px}.pl8{padding-left:8px}.pl9{padding-left:9px}

/* title bar */
.titlebar{height:34px;flex:none;background:#3b3a39;color:#fff;display:flex;align-items:center;position:relative}
.tb-ic{width:16px;height:16px;fill:none;stroke:#d8d8d8;stroke-width:1.100;margin-right:14px}
.tb-ic.first{margin-left:17px}
.tb-ic.dim{stroke:#6c6b6a;margin-right:9px}
.doc-title{font-size:11.420px;white-space:nowrap;width:446px;flex:none}
.caret{width:9px;height:5px;fill:#fff;margin:-5px 0 0 1px}
.top-search{margin-left:83px;width:400px;flex:none;height:24px;background:#d2d2cf;border-radius:2px;display:flex;align-items:center;padding-left:18px;color:#33544e;font-size:12.500px}
.top-search svg{width:16px;height:16px;fill:none;stroke:#333;stroke-width:1;margin-right:10px}
.user{margin-left:56px;font-size:11.700px;white-space:nowrap;width:92px;flex:none}
.avatar{width:20px;height:20px;margin-left:10px}
.win-btns{display:flex;margin-left:27px;flex:none}
.win-btns svg{width:12px;height:12px;fill:none;stroke:#eee;stroke-width:1;margin-right:32px}

/* ribbon */
.ribbon{height:126px;flex:none;background:#fbfbfb;box-shadow:0 2px 3px rgba(0,0,0,.16);position:relative;z-index:2}
.tabs{height:31px;display:flex;align-items:stretch;font-size:13.300px;position:relative}
.tab{display:flex;align-items:center;color:#323130;white-space:nowrap}
.first-tab{margin-left:22px}
.tab.current .tab-label{font-weight:600;align-self:stretch;display:flex;align-items:center;border-bottom:3px solid #117865;padding-top:2px;height:31px;color:#252423}
.tab.ctx{background:#fff;font-weight:600;padding-left:16px;color:#1a4a5c}
.tab.w75{margin-right:4px}
.share{margin-left:auto;margin-right:6px;margin-top:4px;height:24px;width:84px;background:#117865;color:#fff;border-radius:3px;display:flex;align-items:center;padding-left:7px;font-size:12px;gap:9px}
.share svg{width:14px;height:14px;fill:none;stroke:#fff;stroke-width:1}
.share .share-chev{width:10px;height:6px;margin-left:-3px}
.commands{height:95px;display:flex;padding-top:5px;position:relative}
.group{height:88px;border-right:1px solid #d6d5d3;display:flex;flex-direction:column}
.items{display:flex;height:76px}
.item{display:flex;flex-direction:column;align-items:center;padding-top:6px;text-align:center;white-space:nowrap;line-height:16px;color:#484644}
.item svg{width:32px;height:32px;margin-bottom:2px;fill:none;stroke:#3b3a39;stroke-width:1}
.item span{display:block}
.item.off{color:#c4c3c2}
.item .dots{fill:#333;stroke:none}
.chev{display:inline-block;width:5px;height:5px;border:solid #484644;border-width:0 1px 1px 0;transform:rotate(45deg) translate(-2px,0);margin-left:4px}
.off .chev{border-color:#c4c3c2;margin-left:0}
.small-col{display:flex;flex-direction:column;padding-top:4px;gap:8px;margin-left:0}
.small{display:flex;align-items:center;height:16px;gap:6px;white-space:nowrap;color:#484644;font-size:11px}
.small svg{width:16px;height:16px;fill:none}
.group-name{text-align:center;font-size:9.800px;line-height:12px;color:#605e5c;margin-top:auto;margin-bottom:-2px}
.svg-x{font-size:11px;font-weight:700;fill:#fff;stroke:none;text-anchor:middle}
.svg-a{font-size:22px;fill:#2b88d8;stroke:none;text-anchor:middle}
.collapse{position:absolute;right:6px;bottom:6px;width:9px;height:6px;fill:none;stroke:#333;stroke-width:1.500}

/* workspace */
.workspace{height:543px;flex:none;display:flex;position:relative}
.rail{width:42px;flex:none;border-right:1px solid #e1dfdd;background:#f3f2f1}
.rail-btn{height:40px;display:flex;align-items:center;justify-content:center;border-left:3px solid transparent;padding-right:3px}
.rail-btn.active{border-left-color:#117865}
.rail-btn svg{width:16px;height:16px;fill:none;stroke:#444;stroke-width:1}
.report{width:761px;flex:none;display:flex;flex-direction:column}
.canvas{height:508px;background:#fff;padding-top:40px;display:flex;flex-direction:column;align-items:flex-start}
.visual-tools{height:20px;width:735px;display:flex;justify-content:flex-end;align-items:flex-start;gap:12px;padding-right:0}
.visual-tools svg{width:16px;height:16px;fill:none;stroke:#666;stroke-width:1}
.visual-tools svg.fill{fill:#666;stroke:none}
.visual{margin-left:154px;width:586px;height:340px;border:1px solid #bdbdbd;position:relative}
.links{position:absolute;left:0;top:0;width:584px;height:338px;fill:none;stroke-width:1}
.links .faint{stroke:#ededed}
.links .blue{stroke:#2f95f5;stroke-width:1.200}
.links .dotted{stroke-dasharray:1.500 1;stroke-width:1}
.corner{position:absolute;width:9px;height:9px;border:solid #9a9a9a;border-width:3px 0 0 3px}
.corner.tl{left:-1px;top:-1px}
.corner.tr{right:-1px;top:-1px;border-width:3px 3px 0 0}
.corner.bl{left:-1px;bottom:-1px;border-width:0 0 3px 3px}
.corner.br{right:-1px;bottom:-1px;border-width:0 3px 3px 0}
.edge{position:absolute;background:#9a9a9a}
.edge.top,.edge.bottom{width:12px;height:3px;left:286px}
.edge.top{top:-2px}.edge.bottom{bottom:-2px}
.edge.left,.edge.right{width:3px;height:12px;top:164px}
.edge.left{left:-2px}.edge.right{right:-2px}

.tree{display:flex;gap:29px;padding:8px 0 0 26px;position:relative}
.col{width:78px;flex:none;display:flex;flex-direction:column;font-size:6.600px;line-height:8px;color:#666}
.col.root{padding-top:164.500px}
.col-head{height:12px;padding-bottom:2px;border-bottom:1px solid #1a8cff;display:flex;align-items:center;justify-content:space-between;font-size:8.200px;color:#444;position:relative}
.col-head b{font-weight:400;font-size:10px;color:#888;margin-right:-1px}
.bulb{position:absolute;left:-9px;top:1px;width:6px;height:8px;fill:#fff;stroke:#a8a4f0;stroke-width:.8}
.col-sub{margin-top:3px;height:8px;color:#777}
.rows{margin-top:34px;display:flex;flex-direction:column;gap:12.830px}
.row{height:23px}
.track{height:6.500px;background:#eee;margin-bottom:2px}
.track.chosen{box-shadow:0 0 0 .5px #bbb;background:#e6e6e6}
.fill-bar{height:100%;background:#118dff;box-shadow:0 0 0 .5px #a6d4ff}
.fill-bar.full{width:100%}
.t-label{padding-left:3px;white-space:nowrap;height:8px}
.t-label.sel{font-weight:700;color:#252423}
.t-val{padding-left:3px;height:8px}
.more{width:10px;height:5px;margin:11px 0 0 32px;fill:none;stroke:#aaa;stroke-width:1}
.page-end{margin-top:29px;width:100%;height:2px;background-image:repeating-linear-gradient(90deg,#444 0 2px,transparent 2px 4px)}

.pagebar{height:35px;display:flex;align-items:stretch;background:#f3f2f1;position:relative}
.view-btn{width:45px;display:flex;justify-content:center;padding-top:6px}
.view-btn svg{width:20px;height:18px;fill:none;stroke:#555;stroke-width:1}
.view-btn:first-child{width:41px;position:relative}
.view-btn:nth-child(2){margin-left:2px;padding-top:4px}
.view-btn:nth-child(2) svg{height:22px;width:12px;stroke:#444}
.view-btn.on::after{content:"";position:absolute;left:9px;bottom:3px;width:24px;height:2px;background:#117865;border-radius:1px}
.view-btn.on{margin-left:0}
.pg-arrow{width:5px;height:9px;fill:#ccc;align-self:center;margin:0 7px 0 7px}
.pg-arrow:nth-of-type(3){margin-left:8px;margin-right:13px}
.pg-arrow:nth-of-type(4){margin-left:0;margin-right:8px}
.page-tab{width:76px;background:#fff;border-left:1px solid #e1dfdd;border-bottom:4px solid #117865;display:flex;align-items:center;justify-content:center;font-size:11.500px;color:#252423}
.page-add{width:39px;height:32px;margin-top:2px;background:#117865;display:flex;align-items:center;justify-content:center}
.page-add svg{width:11px;height:11px;stroke:#fff;stroke-width:2.600}

/* panes */
.pane{flex:none;background:#f3f2f1;position:relative}
.pane-title{font-size:15px;font-weight:600;color:#252423}
.pane-head{height:38px;display:flex;align-items:center;padding:0 8px;justify-content:space-between}
.dbl{width:13px;height:13px;fill:none;stroke:#444;stroke-width:1.100}
.filters{width:202px;border-left:1px solid #8a8886;border-right:1px solid #d2d0ce}
.filters-head{height:38px;display:flex;align-items:center;padding-left:13px}
.f-ic{width:15px;height:15px;fill:none;stroke:#333;stroke-width:1.200;margin-right:9px}
.filters-head .pane-title{width:111px}
.eye{width:13px;height:10px;fill:none;stroke:#333;stroke-width:1.100;margin:0 17px 0 0}
.f-search{margin:7px 0 0 8px;width:180px;height:30px;background:#fff;border:1px solid #8a8886;display:flex;align-items:center;padding-left:11px;gap:12px;font-size:12px}
.f-search svg,.d-search svg{width:16px;height:16px;fill:none;stroke:#333;stroke-width:1}
.f-scroll{margin-top:5px;height:428px;border-top:1px solid #dad8d6;overflow:hidden;position:relative;padding-left:8px}
.f-thumb{position:absolute;right:0;top:0;width:6px;height:325px;background:#c8c6c4}
.f-section{height:41px;padding:16px 2px 0 1px;width:184px;display:flex;justify-content:space-between;font-size:11px;color:#484644;line-height:18px}
.f-section em{font-style:normal;color:#2b6fb3;font-weight:400;font-size:12px;letter-spacing:1px;line-height:16px}
.f-section.page{height:51px;padding-top:20px;margin-bottom:-6px}
.f-card{width:184px;height:46px;background:#fff;border:1px solid #c8c6c4;padding:4px 8px;line-height:18px;margin-bottom:6px;color:#484644}
.f-card.add{display:flex;align-items:center;justify-content:center;line-height:12px}

.viz{width:181px;border-right:1px solid #d2d0ce}
.build{height:14px;line-height:14px;padding-left:8px;font-weight:600;color:#252423;font-size:11.300px}
.viz-tabs{display:flex;padding:5px 0 0 8px;gap:34px;height:41px}
.viz-tab{width:32px;height:32px;display:flex;align-items:center;justify-content:center;fill:none}
.viz-tab.on{background:#dcdbd9;border-radius:2px}
.viz-tab svg{width:26px;height:26px;fill:none;stroke-width:1}
.viz-rule{width:180px;height:9px;fill:none;stroke:#a8a6a4;stroke-width:1}
.viz-grid{display:grid;grid-template-columns:repeat(6,28px);grid-auto-rows:28px;padding:6px 0 0 5px;justify-items:center;align-items:center;fill:none;stroke-width:1}
.viz-grid svg{width:19px;height:19px}
.viz-grid .k{stroke:#333;fill:none}
.b{fill:#69a8e2;stroke:#1c6fb8}
.g{fill:#bdbdbd;stroke:#8a8a8a}
.l{stroke:#1c6fb8;fill:none}
.w{stroke:#1c6fb8;fill:#f3f2f1}
.o{fill:#e98b2a;stroke:#b66a1b}
.dk{fill:#333;stroke:none}
.lb{fill:#7fb9ea;stroke:none}
.wf{fill:#f3f2f1;stroke:#1c6fb8}
.gf{fill:#8e8e8e;stroke:none}
.gf2{fill:#8e8e8e;stroke:#777}
.gr{fill:#3d9a42;stroke:none}
.arrow{fill:#2b88d8;stroke:none}
.arc{fill:none;stroke:#1c6fb8;stroke-width:3}
.k2{stroke:#333;stroke-width:1.500;fill:none}
.bl2{stroke:#1c6fb8;stroke-width:1.500;fill:none}
.gg{fill:#3d9a42;stroke:none}
.rr{fill:#d13438;stroke:none}
.ggl{stroke:#999;fill:none}
.wk{fill:#f3f2f1;stroke:#333}
.gs{fill:#888;stroke:#555}
.bd{fill:#2b88d8;stroke:#1c6fb8}
.bs{fill:none;stroke:#1c78c4;stroke-width:1.300}
.kg{fill:#ddd;stroke:#444;stroke-width:1.300}
.bolt{fill:#f5a623;stroke:#c9640e;stroke-width:.6}
.ob{fill:#d9701e;stroke:none}
.pa{fill:none;stroke:#a33cb0;stroke-width:1.200}
.svg-123,.svg-123b{font-size:9px;fill:#2b88d8;stroke:none;text-anchor:middle}
.svg-w{font-size:10px;font-weight:700;fill:#3f6ea8;stroke:none;text-anchor:middle}
.cloud{fill:#fbfbfb;stroke:#ddd}
.pk{fill:#eeb4ac;stroke:none}
.bl3{fill:#b5cde5;stroke:none}
.yc{fill:none;stroke:#f2c80f;stroke-width:2}
.yf{fill:#f2c80f;stroke:none}
.c1,.c2,.c3,.c4,.c5{stroke-width:1.500;fill:none}
.c1{stroke:#e8308f}.c2{stroke:#b440c9}.c3{stroke:#5b5be0}.c4{stroke:#c9c9ff}.c5{stroke:#9fd8c8}
.p1{fill:#2b78b8;stroke:none}.p2{fill:#d9532c;stroke:none}.p3{fill:#efc587;stroke:none}
.sk1{fill:#6a8fa8;stroke:none}.sk2{fill:#e09a5a;stroke:none}.sk3{fill:none;stroke:#777}
.mon{fill:#4a86c5;stroke:#999}
.cal1{fill:#5ba6e6;stroke:none}.cal2{fill:#d9532c;stroke:none}.cal3{fill:#e89a3c;stroke:none}.cal4{fill:#77a970;stroke:none}
.glyph{font-weight:700;color:#2b7cc0;line-height:1}
.glyph.r{font-size:17px}
.glyph.py{font-size:17px;color:#2b88d8;letter-spacing:-.5px}
.glyph.more-viz{font-size:14px;font-weight:400;letter-spacing:1px;color:#2b6fb3}
.tree-on{width:24px;height:24px;background:#e1e1df;border:1px solid #777;display:flex;align-items:center;justify-content:center}
.viz-grid .tree-on svg{width:17px;height:17px}
.viz-dash{margin:2px 8px 0 6px;border-top:1px dashed #d2d0ce;height:1px;margin-bottom:-1px}
.viz-grid.custom{padding-top:2px}
.ext-bc{width:18px;height:16px;background:#333;color:#fff;font-size:9px;font-weight:700;line-height:16px;overflow:hidden;white-space:nowrap;position:relative}
.ext-bc i{position:absolute;right:1px;top:8px;width:5px;height:3px;background:#35d05a}
.ext-fin{width:18px;height:18px;background:#000;border-radius:3px;position:relative;overflow:hidden;display:block}
.ext-fin i{position:absolute;left:4px;top:1px;width:10px;height:10px;border:2px solid #f2c80f;border-radius:50%}
.ext-fin.pro i{border-radius:0;border-width:2px 2px 0 0;left:8px;width:7px;height:9px}
.fin,.prot{position:absolute;left:0;right:3px;bottom:0;height:7px;font-size:6px;line-height:7px;color:#fff;text-align:center;background:#2160c4}
.prot{background:#d8112c}
.viz-line{margin-top:5px;border-top:1px solid #dedcda;height:1px}
.well-title{margin:4px 0 0 12px;height:20px;line-height:20px;color:#484644}
.well{margin:3px 0 0 5px;width:169px;height:111px;background:#fff;border:1px dashed #c8c6c4;padding:4px 2px 0 2px;display:flex;flex-direction:column;gap:3px;position:relative}
.well-thumb{position:absolute;right:-6px;top:2px;width:5px;height:68px;background:#c8c6c4}
.field{height:22px;flex:none;background:#edebe9;border:1px solid #c4c3c1;border-radius:1px;display:flex;align-items:center;padding-left:4px;color:#484644;line-height:1}
.field span{flex:1}
.fchev{width:12px;height:7px;fill:none;stroke:#5b7f9a;stroke-width:1;margin-right:5px}
.fx{width:8px;height:8px;fill:none;stroke:#444;stroke-width:1;margin-right:4px}
.well-title.tips{margin-top:10px}

.data{width:180px;border-left:1px solid #d2d0ce}
.data .pane-head{padding-left:7px}
.d-search{margin:7px 0 0 3px;width:172px;height:27px;border:1px solid #777;border-radius:1px;display:flex;align-items:center;padding-left:7px;gap:6px;background:#f7f6f5;font-size:12px;position:relative;top:1px}
.d-thumb{position:absolute;right:4px;top:190px;width:8px;height:345px;background:#c8c6c4}
.fields{margin-top:6px;height:456px;overflow:hidden}
.fields li{height:24px;display:flex;align-items:center;padding-left:23px;color:#605e5c;white-space:nowrap}
.exp{width:8px;height:12px;margin-right:6px;fill:none;stroke:#999;stroke-width:1}
.cb{width:12px;height:12px;border:1px solid #8a8886;border-radius:2px;background:#f7f6f5;margin-right:7px;position:relative}
.cb.on{background:#117865;border-color:#117865}
.cb.on::after{content:"";position:absolute;left:3px;top:0;width:4px;height:8px;border:solid #fff;border-width:0 1.500px 1.500px 0;transform:rotate(40deg)}
.ty{width:12px;margin-right:7px;flex:none}
.sig{font-size:14px;color:#333;text-align:center;line-height:14px}
.cal{height:12px;fill:none;stroke:#444;stroke-width:.8}

/* status bar */
.status{height:24px;flex:none;border-top:1px solid #e1dfdd;background:#f3f2f1;display:flex;align-items:center;color:#605e5c;font-size:11.300px;position:relative;z-index:1}
.pageinfo{margin-left:4px;width:958px;flex:none}
.zoom-minus{width:9px;font-weight:700}
.slider{width:99px;height:1px;background:#555;position:relative}
.slider .thumb{position:absolute;left:27px;top:-5px;width:3px;height:11px;background:#555}
.slider .tick{position:absolute;left:50px;top:-2px;width:1px;height:5px;background:#777}
.zoom-plus{margin-left:7px;width:19px;font-size:13px}
.zoom-val{width:44px;padding-left:2px}
.fit{width:16px;height:13px;fill:none;stroke:#555;stroke-width:1}
.fit-in{stroke:#555}
.update{margin-left:14px;white-space:nowrap;font-size:11.500px}

/* taskbar */
.taskbar{height:41px;flex:none;border-top:2px solid #141414;background:linear-gradient(90deg,#cbe4ef 0,#cfe2ee 50%,#d4deeb 100%);display:flex;align-items:stretch;color:#111}
.start{width:48px;display:flex;align-items:center;justify-content:center}
.start svg{width:16px;height:16px;fill:#000}
.ts-box{width:287px;background:#fff;border:1px solid #ccc;display:flex;align-items:center;padding-left:11px;gap:12px;font-size:13.700px;color:#222;margin-top:0;height:39px}
.ts-box svg{width:16px;height:16px;fill:none;stroke:#111;stroke-width:1}
.task{display:flex;align-items:center;justify-content:center;flex:none;border-bottom:3px solid transparent}
.task:nth-child(3){margin-left:1px;width:49px}
.task:nth-child(4){margin-left:2px}
.task svg{width:24px;height:24px}
.task:nth-child(3) svg{width:17px;height:17px}
.task:nth-child(5){border-bottom-color:#0f78d4;background-clip:padding-box}
.pbi{background:#e9f3f8;border-bottom-color:#0f78d4;margin-left:2px}
.tv{fill:none;stroke:#111;stroke-width:1.200}
.e1{fill:#2fb7c9}.e2{fill:#1a6fc4}.e3{fill:#a86a27}.e4{fill:none;stroke:#a86a27}
.x1{fill:#f7cd5b}.x2{fill:#d9a334}.x3{fill:#1f86d1}
.m1{fill:#0f6cbd}.m2{fill:#36a5e8}.m3{fill:#fff}
.f1{fill:#ef4e5b}.f2{fill:#ffb020}.f3{fill:#7a2fc0}.f4{fill:#ff9a2b}
.pb1{fill:#d9a01b}.pb2{fill:#f2c94c}.pb3{fill:#f7dd7e}
.tb-right{display:flex;align-items:center;margin-left:225px;flex:none}
.wx{width:24px;height:24px}
.wx1{fill:#f19a1a}
.wx2{stroke:#ffe7b0;stroke-width:1.500;fill:none}
.temp{margin-left:9px;font-size:13px;width:37px}
.haze{font-size:13px;width:49px}
.tray{display:flex;margin-left:0}
.tray svg{width:14px;height:14px;margin:0 9px}
.tr{fill:none;stroke:#111;stroke-width:1}
.tro{fill:#f7861c}
.trf{fill:#111}
.trk{fill:#555;stroke:#d4deeb}
.pen{width:16px;height:16px;margin-left:11px}
.eng{font-size:11.800px;width:34px;text-align:center;margin-left:12px}
.clock{width:74px;display:flex;flex-direction:column;align-items:center;font-size:11.800px;line-height:19px;white-space:nowrap}
.notif{position:relative;margin-left:10px;width:16px;height:16px}
.notif svg{width:16px;height:16px;fill:#000}
.nl{stroke:#fff;fill:none}
.notif b{position:absolute;left:6px;top:6px;width:16px;height:16px;border-radius:50%;background:#8a8a8a;border:1px solid #555;font-size:10px;line-height:14px;text-align:center;color:#222;font-weight:400}
```
